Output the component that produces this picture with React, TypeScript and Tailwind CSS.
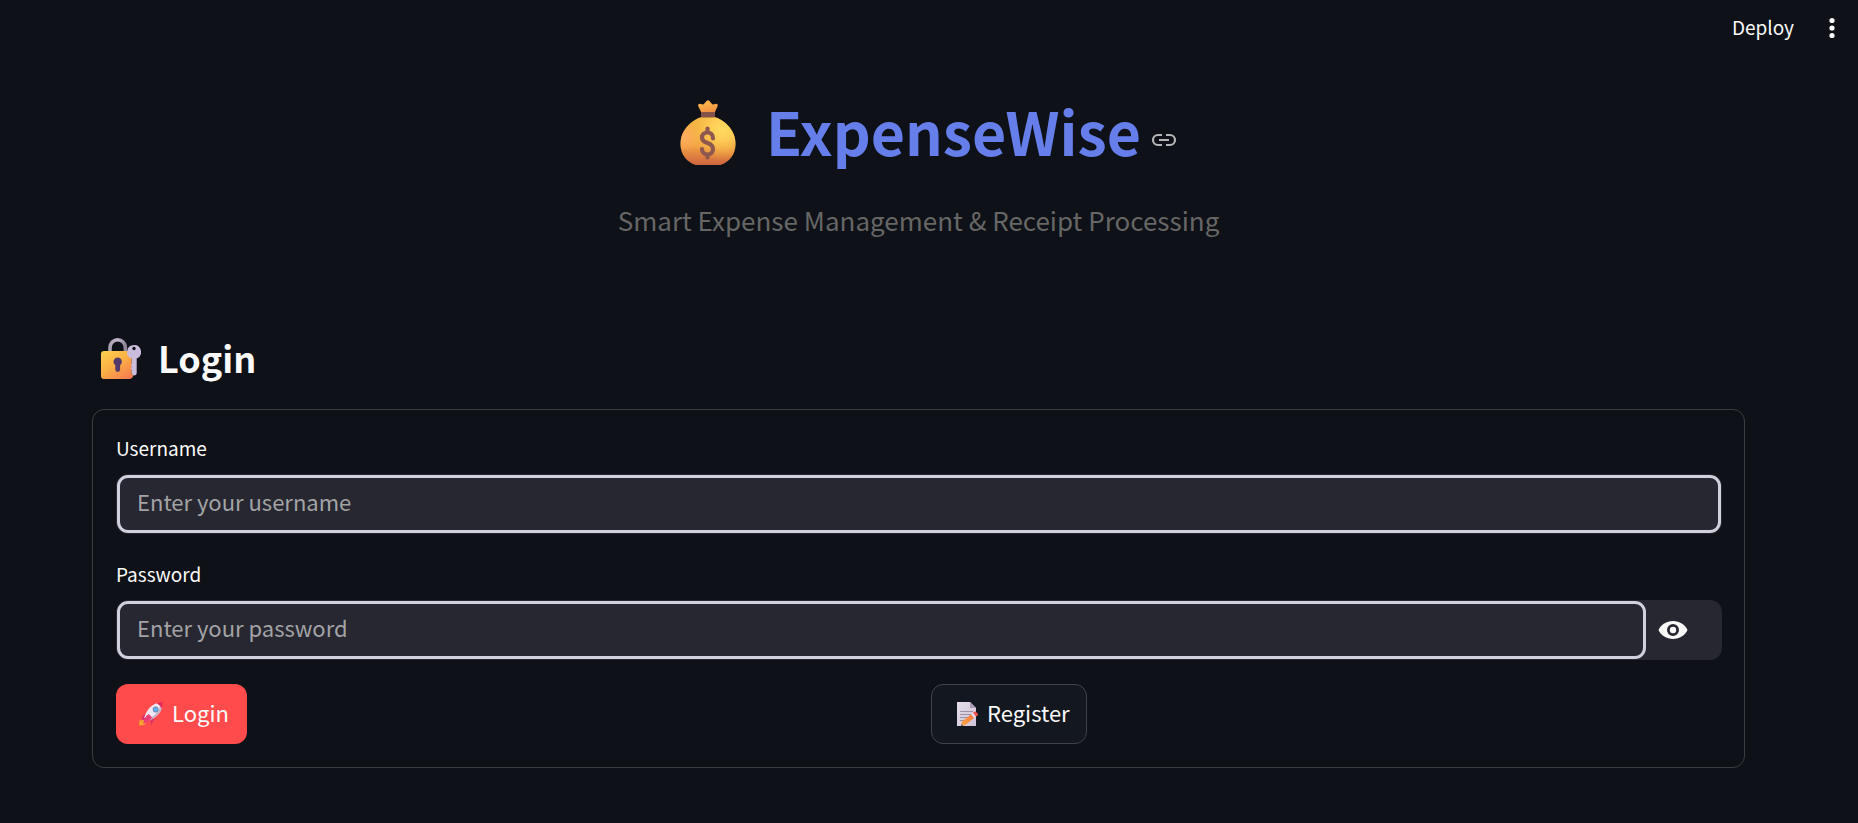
import { useState } from 'react';

function MoneyBag() {
  return (
    <svg viewBox="0 0 56 66" className="h-[66px] w-14 shrink-0" aria-hidden="true">
      <defs>
        <linearGradient id="bag" x1="0" y1="0" x2="0" y2="1">
          <stop offset="0" stopColor="#f5b540" />
          <stop offset="0.6" stopColor="#f2a142" />
          <stop offset="1" stopColor="#cc6440" />
        </linearGradient>
        <radialGradient id="bagShine" cx="0.76" cy="0.26" r="0.65">
          <stop offset="0" stopColor="#ffdb60" />
          <stop offset="0.35" stopColor="#ffd35a" stopOpacity="0.85" />
          <stop offset="1" stopColor="#f5b540" stopOpacity="0" />
        </radialGradient>
        <radialGradient id="bagSide" cx="0.06" cy="0.4" r="0.32">
          <stop offset="0" stopColor="#ffae62" />
          <stop offset="1" stopColor="#ffae62" stopOpacity="0" />
        </radialGradient>
        <linearGradient id="bagTop" x1="0" y1="0" x2="0.3" y2="1">
          <stop offset="0" stopColor="#ffc250" />
          <stop offset="1" stopColor="#f08f42" />
        </linearGradient>
      </defs>
      <path
        d="M22 14 18.300 6.300C17.600 4.600 19 3.300 20.600 4L23.400 4.600 26.600.9C27.400.1 28.600.1 29.400.9L32.400 4.600 35.400 4C37 3.400 38.300 4.700 37.600 6.300L34 14Z"
        fill="url(#bagTop)"
      />
      <path d="M22 17h12c9 2 21.500 12 21.500 27C55.500 55 49 62 40.500 65h-25C7 62 .5 55 .5 44 .5 29 13 19 22 17Z" fill="url(#bag)" />
      <path d="M22 17h12c9 2 21.500 12 21.500 27C55.500 55 49 62 40.500 65h-25C7 62 .5 55 .5 44 .5 29 13 19 22 17Z" fill="url(#bagSide)" />
      <path d="M22 17h12c9 2 21.500 12 21.500 27C55.500 55 49 62 40.500 65h-25C7 62 .5 55 .5 44 .5 29 13 19 22 17Z" fill="url(#bagShine)" />
      <rect x="21" y="12" width="14" height="5.500" rx="1.500" fill="#865348" />
      <path
        d="M33 38.500c0-4-2.500-6-5.500-6s-5.500 2-5.500 5c0 3.500 2.500 4.500 5.500 5.500s5.500 2.500 5.500 6-2.500 5.500-5.500 5.500-5.500-2-5.500-5.500M27.500 28.500v4M27.500 54.500v3"
        fill="none"
        stroke="#8e584e"
        strokeWidth="4.200"
        strokeLinecap="round"
      />
    </svg>
  );
}

function LockWithKey() {
  return (
    <svg viewBox="0 0 40 41" className="h-[41px] w-10 shrink-0" aria-hidden="true">
      <defs>
        <linearGradient id="lockBody" x1="0" y1="0" x2="0.8" y2="1">
          <stop offset="0" stopColor="#ffd04f" />
          <stop offset="0.5" stopColor="#fbb045" />
          <stop offset="1" stopColor="#f77d50" />
        </linearGradient>
        <linearGradient id="shackle" x1="0" y1="0" x2="1" y2="0">
          <stop offset="0" stopColor="#a9a1ae" />
          <stop offset="0.5" stopColor="#c3b8ce" />
          <stop offset="1" stopColor="#8d8495" />
        </linearGradient>
      </defs>
      <path d="M9 15V9.500a7.700 7.700 0 0 1 15.400 0V15" fill="none" stroke="url(#shackle)" strokeWidth="3.600" />
      <path d="M3 13h24.500c1 3.500 2 4.500 3 6V36l2 1c-.6 2.600-2 4-4.500 4H3a3 3 0 0 1-3-3V16a3 3 0 0 1 3-3Z" fill="url(#lockBody)" />
      <path d="M27.800 13.500c.3 3.300 1.200 5.500 2.700 7v16" fill="none" stroke="#c27a48" strokeWidth="1" />
      <path d="M16.700 19.500a4.200 4.200 0 0 0-2.400 7.600v4.400a2.400 2.400 0 0 0 4.800 0v-4.400a4.200 4.200 0 0 0-2.400-7.600Z" fill="#533a6b" />
      <path
        fillRule="evenodd"
        d="M33 7a7 7 0 0 0-2.200 13.600v5l-1 1.400 1 1.500-1 1.700 1 1.800V35c0 1.500 1 2.500 2.400 2.500s2.500-1 2.500-2.500V20.500A7 7 0 0 0 33 7Zm0 1.800a1.700 1.700 0 1 1 0 3.400 1.700 1.700 0 0 1 0-3.400Z"
        fill="#cbbcdc"
      />
    </svg>
  );
}

function Rocket() {
  return (
    <svg viewBox="0 0 24 24" className="size-6 shrink-0" aria-hidden="true">
      <path d="M4.500 16.500.5 18.500 0 23.500l5-.5 2.500-3Z" fill="#f9a12f" />
      <path d="M8.500 11.500 4 13.200 2.300 18.600l4.700-1.400ZM13.300 15.300 11.700 19l.3 4.200 2.600-4.400.6-5Z" fill="#d9316b" />
      <path d="M18 1.200C12 3 7.500 8 5.300 15.500L8.800 18.800C16 16.500 21 12 22.800 6 22 4 20 2 18 1.200Z" fill="#efe8f1" />
      <path d="M22.800 6C21 12 16 16.500 8.800 18.800l-1.200-1.200C14 15.500 19 11 21.300 4Z" fill="#c6b6cd" />
      <path d="M17.500 1.300 23.800.2 22.900 6.700C21.700 4.400 19.800 2.400 17.500 1.300Z" fill="#e02a5c" />
      <path d="M9.800 12c-3.200 1.800-4.800 5-5.600 9.500 4.200-.9 7.200-3 8.800-6.300Z" fill="#ec3f78" />
      <circle cx="16.600" cy="7.500" r="2.900" fill="#7c86ab" />
      <circle cx="16.600" cy="7.500" r="2.100" fill="#57b4fb" />
    </svg>
  );
}

function Memo() {
  return (
    <svg viewBox="0 0 22 24" className="h-6 w-[22px] shrink-0" aria-hidden="true">
      <defs>
        <linearGradient id="sheet" x1="0" y1="0" x2="1" y2="1">
          <stop offset="0" stopColor="#e5dfea" />
          <stop offset="1" stopColor="#d0c3d8" />
        </linearGradient>
        <linearGradient id="pencil" x1="0" y1="1" x2="1" y2="0">
          <stop offset="0" stopColor="#ffad45" />
          <stop offset="1" stopColor="#f5723e" />
        </linearGradient>
      </defs>
      <path d="M0 0h13l6 6v18H0Z" fill="url(#sheet)" />
      <path d="M13 0v6h6Z" fill="#a99bb3" />
      <path d="M3 9.500h13M3 12.500h13M3 15.500h9M3 18.500h6" stroke="#9b90a5" strokeWidth="1.100" />
      <path d="M5 19.500 14.500 12l3 3.500L8.500 23 4 24Z" fill="url(#pencil)" />
      <path d="m14 12.200 2-1.500 3 3.700-2 1.500Z" fill="#e4d9ea" />
      <path d="m16 10.700 1.500-1c.7-.5 1.300-.4 1.800.2l1.500 1.900c.5.600.4 1.200-.2 1.700L19 14.500Z" fill="#f4504d" />
      <path d="m4.600 22 1.700 1.700L4 24Z" fill="#5b4460" />
    </svg>
  );
}

const inputClass =
  'block h-[58px] w-full min-w-0 rounded-[11px] border-[3px] border-[#d1d1de] bg-[#262730] px-[17px] pb-1.5 text-[22px] text-[#fafafa] outline-none placeholder:text-[#a3a3a6] placeholder:opacity-100';

export default function App() {
  const [visible, setVisible] = useState(false);
  return (
    <div className="flex min-h-screen flex-col bg-[#0e1117] font-['Noto_Sans_CJK_SC','Noto_Sans',sans-serif] text-[#fafafa]">
      <header className="flex h-14 items-center justify-end gap-8 pr-5">
        <button type="button" className="pb-0.5 text-[19px] leading-7">
          Deploy
        </button>
        <button type="button" aria-label="Main menu" className="flex w-3 justify-center">
          <svg viewBox="0 0 6 22" className="h-[22px] w-1.5" fill="currentColor" aria-hidden="true">
            <circle cx="3" cy="3.500" r="2.600" />
            <circle cx="3" cy="11" r="2.600" />
            <circle cx="3" cy="18.500" r="2.600" />
          </svg>
        </button>
      </header>

      <main className="pr-[113px] pl-[92px]">
        <div className="flex flex-col items-center pt-[33px]">
          <h1 className="flex items-center pl-5 text-[59px] leading-[84px] font-bold text-[#667eea]">
            <MoneyBag />
            <span className="ml-[30px] pb-1">ExpenseWise</span>
            <a href="#expensewise" aria-label="Link to heading" className="mt-3.5 ml-2.5 text-[#b4b4b6]">
              <svg viewBox="0 0 26 14" className="h-3.5 w-[26px]" fill="none" stroke="currentColor" strokeWidth="2.200" aria-hidden="true">
                <path d="M11 2H7a5 5 0 0 0 0 10h4M15 2h4a5 5 0 0 1 0 10h-4M8 7h10" />
              </svg>
            </a>
          </h1>
          <p className="mt-[25px] text-[26px] leading-9 text-[#666666]">Smart Expense Management &amp; Receipt Processing</p>
        </div>

        <h2 className="mt-[81px] flex items-center gap-[17px] pl-[9px] text-[36px] leading-[76px] font-semibold">
          <LockWithKey />
          <span className="pb-0.5">Login</span>
        </h2>

        <form onSubmit={(e) => e.preventDefault()} className="mt-3 rounded-xl border border-[#3c3d43] pt-6 pr-[22px] pb-[23px] pl-[23px]">
          <label htmlFor="username" className="mb-3 block text-[19px] leading-7">
            Username
          </label>
          <div className="rounded-xl bg-[#262730] p-px">
            <input id="username" type="text" placeholder="Enter your username" className={inputClass} />
          </div>

          <label htmlFor="password" className="mt-[26px] mb-3 block text-[19px] leading-7">
            Password
          </label>
          <div className="flex items-center rounded-xl bg-[#262730] p-px">
            <input id="password" type={visible ? 'text' : 'password'} placeholder="Enter your password" className={inputClass} />
            <button
              type="button"
              aria-label="Show password"
              onClick={() => setVisible(!visible)}
              className="shrink-0 pr-[33px] pl-3"
            >
              <svg viewBox="0 0 30 20" className="h-5 w-[30px]" aria-hidden="true">
                <path d="M15 1C8.500 1 3 4.500.5 10 3 15.500 8.500 19 15 19s12-3.500 14.500-9C27 4.500 21.500 1 15 1Z" fill="#fafafa" />
                <circle cx="15" cy="10" r="4.600" fill="#fafafa" stroke="#262730" strokeWidth="2.800" />
              </svg>
            </button>
          </div>

          <div className="mt-6 grid grid-cols-2 gap-6">
            <div>
              <button type="submit" className="flex h-[60px] items-center gap-[9px] rounded-xl bg-[#ff4b4b] pr-[18px] pl-[23px] text-[22px]">
                <Rocket />
                <span className="pb-1">Login</span>
              </button>
            </div>
            <div>
              <button
                type="button"
                className="flex h-[60px] items-center gap-2 rounded-xl border border-[#414349] bg-[#13171f] pr-4 pl-[25px] text-[22px]"
              >
                <Memo />
                <span className="pb-1">Register</span>
              </button>
            </div>
          </div>
        </form>
      </main>
    </div>
  );
}
